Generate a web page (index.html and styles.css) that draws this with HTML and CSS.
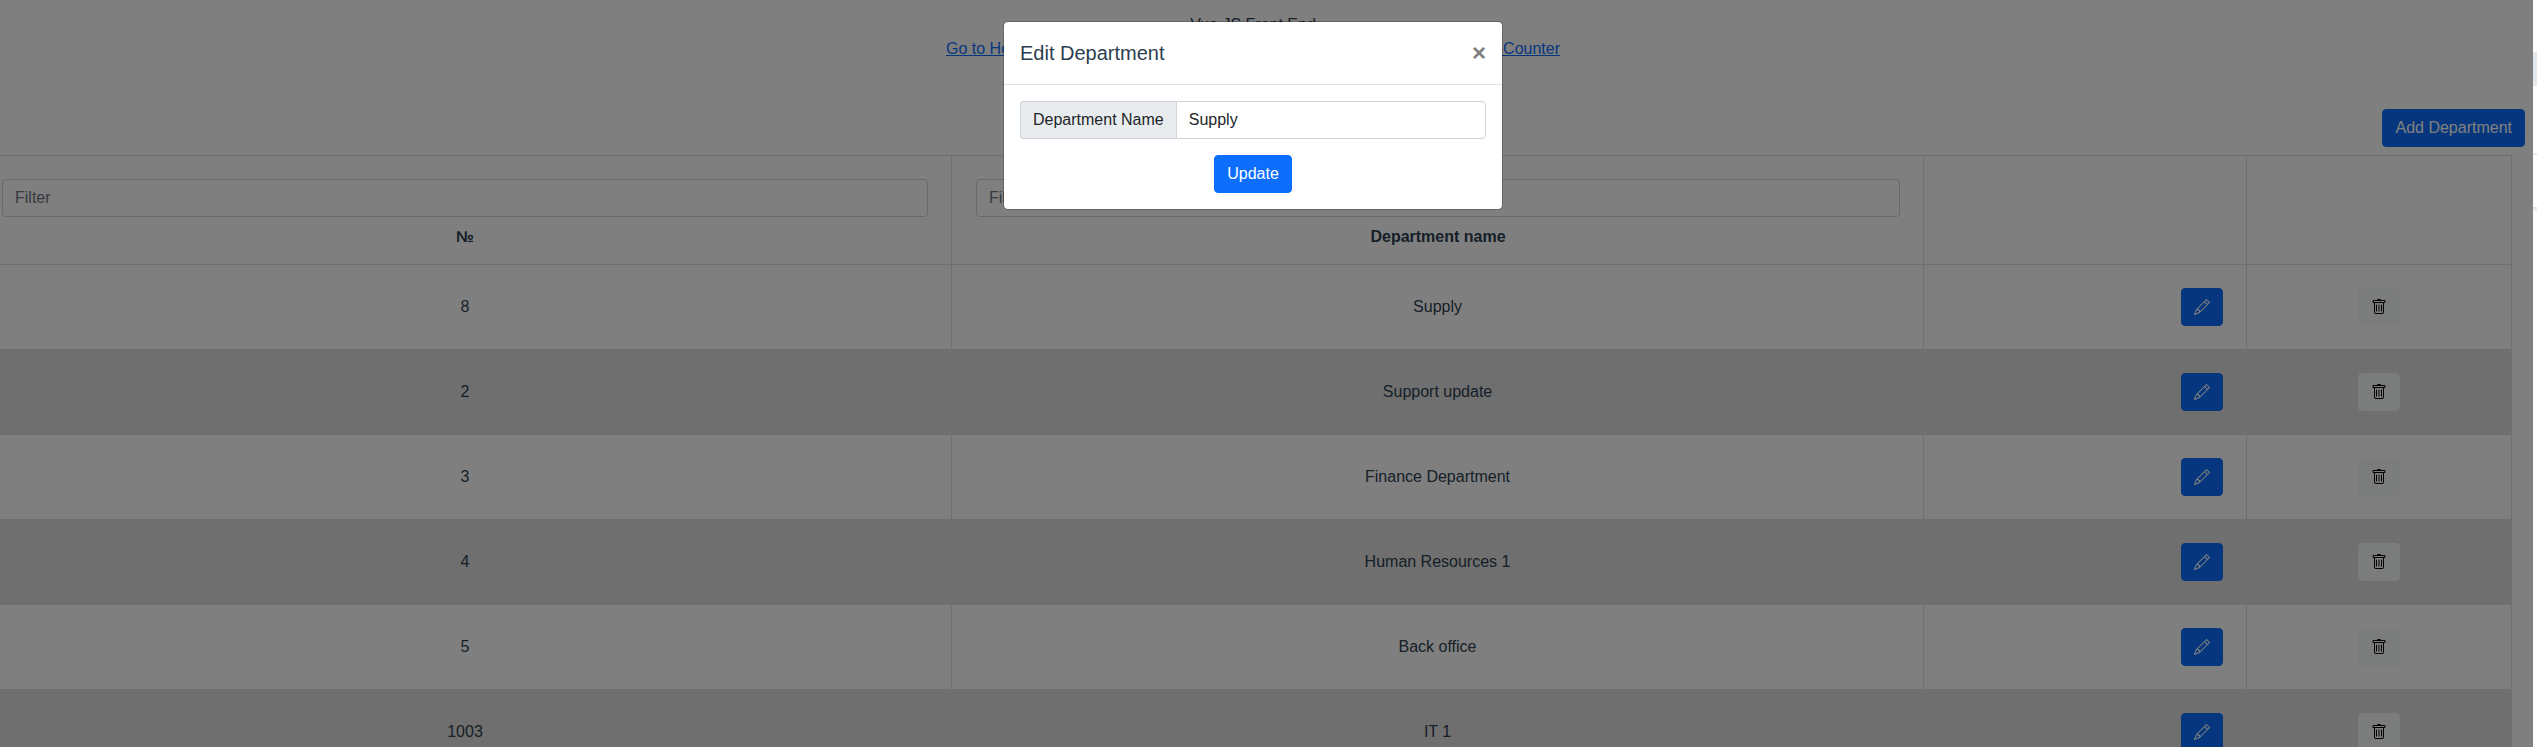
FILE: index.html
```html
<!DOCTYPE html>
<html lang="en">
<head>
<meta charset="utf-8">
<title>Departments</title>
<link rel="stylesheet" href="styles.css">
</head>
<body>
<svg class="sprite" aria-hidden="true">
  <symbol id="pencil" viewBox="0 0 16 16"><path d="M12.146.146a.5.5 0 0 1 .708 0l3 3a.5.5 0 0 1 0 .708l-10 10a.5.5 0 0 1-.168.11l-5 2a.5.5 0 0 1-.65-.65l2-5a.5.5 0 0 1 .11-.168l10-10zM11.207 2.5 13.5 4.793 14.793 3.5 12.5 1.207 11.207 2.5zm1.586 3L10.5 3.207 4 9.707V10h.5a.5.5 0 0 1 .5.5v.5h.5a.5.5 0 0 1 .5.5v.5h.293l6.5-6.5zm-9.761 5.175-.106.106-1.528 3.821 3.821-1.528.106-.106A.5.5 0 0 1 5 12.5V12h-.5a.5.5 0 0 1-.5-.5V11h-.5a.5.5 0 0 1-.468-.325z"/></symbol>
  <symbol id="trash" viewBox="0 0 16 16"><path d="M5.5 5.5A.5.5 0 0 1 6 6v6a.5.5 0 0 1-1 0V6a.5.5 0 0 1 .5-.5zm2.500 0a.5.5 0 0 1 .5.5v6a.5.5 0 0 1-1 0V6a.5.5 0 0 1 .5-.5zm3 .5a.5.5 0 0 0-1 0v6a.5.5 0 0 0 1 0V6z"/><path fill-rule="evenodd" d="M14.500 3a1 1 0 0 1-1 1H13v9a2 2 0 0 1-2 2H5a2 2 0 0 1-2-2V4h-.5a1 1 0 0 1-1-1V2a1 1 0 0 1 1-1H6a1 1 0 0 1 1-1h2a1 1 0 0 1 1 1h3.500a1 1 0 0 1 1 1v1zM4.118 4 4 4.059V13a1 1 0 0 0 1 1h6a1 1 0 0 0 1-1V4.059L11.882 4H4.118zM2.500 3V2h11v1h-11z"/></symbol>
</svg>
<div class="frame">
  <div class="app">
    <header class="top">
      <div>Vue JS Front End</div>
      <nav class="nav"><a href="#home">Go to Home</a><a href="#counter">Go to Counter</a></nav>
    </header>
    <div class="toolbar"><button class="btn primary" type="button">Add Department</button></div>
    <table class="grid">
      <colgroup><col class="c-id"><col class="c-name"><col class="c-edit"><col class="c-del"></colgroup>
      <thead><tr>
        <th><input class="field" type="text" placeholder="Filter" aria-label="Filter by number"><div class="label">№</div></th>
        <th><input class="field" type="text" placeholder="Filter" aria-label="Filter by name"><div class="label">Department name</div></th>
        <th></th><th></th>
      </tr></thead>
      <tbody>
        <tr><td>8</td><td>Supply</td><td class="edit"><button class="btn primary" type="button" aria-label="Edit"><svg class="icon"><use href="#pencil"/></svg></button></td><td><button class="btn light" type="button" aria-label="Delete"><svg class="icon"><use href="#trash"/></svg></button></td></tr>
        <tr><td>2</td><td>Support update</td><td class="edit"><button class="btn primary" type="button" aria-label="Edit"><svg class="icon"><use href="#pencil"/></svg></button></td><td><button class="btn light" type="button" aria-label="Delete"><svg class="icon"><use href="#trash"/></svg></button></td></tr>
        <tr><td>3</td><td>Finance Department</td><td class="edit"><button class="btn primary" type="button" aria-label="Edit"><svg class="icon"><use href="#pencil"/></svg></button></td><td><button class="btn light" type="button" aria-label="Delete"><svg class="icon"><use href="#trash"/></svg></button></td></tr>
        <tr><td>4</td><td>Human Resources 1</td><td class="edit"><button class="btn primary" type="button" aria-label="Edit"><svg class="icon"><use href="#pencil"/></svg></button></td><td><button class="btn light" type="button" aria-label="Delete"><svg class="icon"><use href="#trash"/></svg></button></td></tr>
        <tr><td>5</td><td>Back office</td><td class="edit"><button class="btn primary" type="button" aria-label="Edit"><svg class="icon"><use href="#pencil"/></svg></button></td><td><button class="btn light" type="button" aria-label="Delete"><svg class="icon"><use href="#trash"/></svg></button></td></tr>
        <tr><td>1003</td><td>IT 1</td><td class="edit"><button class="btn primary" type="button" aria-label="Edit"><svg class="icon"><use href="#pencil"/></svg></button></td><td><button class="btn light" type="button" aria-label="Delete"><svg class="icon"><use href="#trash"/></svg></button></td></tr>
      </tbody>
    </table>
    <div class="backdrop">
      <section class="modal" role="dialog" aria-labelledby="modal-title">
        <div class="modal-head">
          <h5 class="modal-title" id="modal-title">Edit Department</h5>
          <button class="close" type="button" aria-label="Close">×</button>
        </div>
        <form class="modal-body">
          <div class="group">
            <label class="addon" for="name">Department Name</label>
            <input class="field" id="name" type="text" value="Supply">
          </div>
          <button class="btn primary" type="button">Update</button>
        </form>
      </section>
    </div>
  </div>
  <aside class="edge"><div class="edge-tab"></div><div class="edge-card"></div></aside>
</div>
</body>
</html>
```
FILE: styles.css
```css
* { box-sizing: border-box; }
body {
  margin: 0;
  background: #fff;
  color: #2c3e50;
  font: 16px/24px "Liberation Sans", Arial, sans-serif;
}
.sprite { position: absolute; width: 0; height: 0; }
.frame { display: flex; height: 100vh; overflow: hidden; }
.app { position: relative; flex: 1; min-width: 0; overflow: hidden; }
.top { padding: 13px 27px 0 0; text-align: center; }
.nav { display: flex; justify-content: space-between; width: 614px; margin: 0 auto; }
.nav a { color: #0d6efd; }
.toolbar { display: flex; justify-content: flex-end; padding: 48px 8px 8px 0; }

.btn {
  height: 38px;
  padding: 6px 12px;
  border: 1px solid transparent;
  border-radius: 4px;
  font: inherit;
  vertical-align: middle;
}
.primary { background: #0d6efd; border-color: #0d6efd; color: #fff; }
.light { background: #f6f9f8; border-color: #f6f9f8; color: #000; }
.icon { display: block; width: 16px; height: 16px; fill: currentColor; }

.field {
  display: block;
  width: 100%;
  height: 38px;
  padding: 6px 12px;
  border: 1px solid #ced4da;
  border-radius: 4px;
  background: #fff;
  color: #212529;
  font: inherit;
}
.field::placeholder { color: #6c757d; opacity: 1; }

.grid {
  width: calc(100% - 21px);
  table-layout: fixed;
  border-collapse: separate;
  border-spacing: 0;
  text-align: center;
}
.c-id { width: 37.9%; }
.c-edit { width: 323px; }
.c-del { width: 265px; }
.grid th, .grid td {
  padding: 23px;
  border: solid #dedede;
  border-width: 0 1px 1px 0;
  vertical-align: middle;
}
.grid th { padding: 23px 23px 15px 24px; border-top-width: 1px; }
.grid th .field { font-weight: 400; }
.grid th:first-child, .grid td:first-child { padding-left: 2px; }
.grid td { height: 85px; padding-top: 0; padding-bottom: 0; }
.grid .edit { text-align: right; }
.grid tbody tr:nth-child(even) { background: #dedede; }
.label { margin-top: 8px; }

.backdrop {
  position: absolute;
  inset: 0;
  padding: 21px 27px 0 0;
  background: rgba(0, 0, 0, 0.5);
}
.modal {
  max-width: 500px;
  margin: 0 auto;
  border: 1px solid rgba(0, 0, 0, 0.2);
  border-radius: 5px;
  background: #fff;
  background-clip: padding-box;
}
.modal-head {
  display: flex;
  align-items: center;
  justify-content: space-between;
  padding: 16px;
  border-bottom: 1px solid #dee2e6;
}
.modal-title { margin: 0; font-size: 20px; line-height: 30px; font-weight: 400; }
.close {
  padding: 0;
  border: 0;
  background: none;
  color: #7f7f7f;
  font: bold 24px/24px "Liberation Sans", Arial, sans-serif;
}
.modal-body { padding: 16px; text-align: center; }
.group { display: flex; margin-bottom: 16px; }
.addon {
  padding: 6px 12px;
  border: 1px solid #ced4da;
  border-right: 0;
  border-radius: 4px 0 0 4px;
  background: #e9ecef;
  color: #212529;
  white-space: nowrap;
}
.group .field { flex: 1; min-width: 0; border-radius: 0 4px 4px 0; }

.edge { width: 4px; padding-top: 52px; background: #fff; overflow: hidden; }
.edge-tab { height: 34px; background: #e4e9ed; }
.edge-card {
  height: 53px;
  margin-top: 68px;
  border-top: 1px solid #dadce0;
  box-shadow: 0 2px 5px rgba(0, 0, 0, 0.3);
}
```
